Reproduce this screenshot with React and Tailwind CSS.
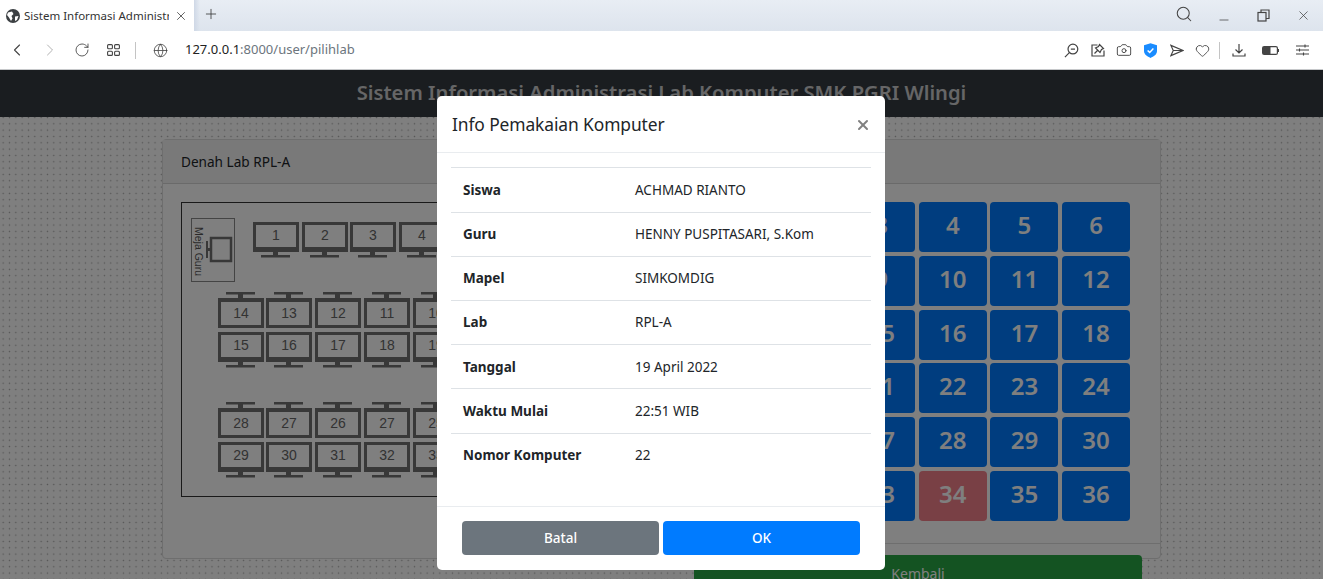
import React from 'react';
import { ChevronLeft, ChevronRight, RotateCw, Globe, Camera, Heart, Plus, X, Search, Minus } from 'lucide-react';

const topRow = [[253, '1'], [302, '2'], [350, '3'], [399, '4']];
const rowXs = [218, 266, 315, 364, 413];
const row2 = ['14', '13', '12', '11', '10'];
const row3 = ['15', '16', '17', '18', '19'];
const row4 = ['28', '27', '26', '27', '25'];
const row5 = ['29', '30', '31', '32', '33'];

const info = [
  ['Siswa', 'ACHMAD RIANTO'],
  ['Guru', 'HENNY PUSPITASARI, S.Kom'],
  ['Mapel', 'SIMKOMDIG'],
  ['Lab', 'RPL-A'],
  ['Tanggal', '19 April 2022'],
  ['Waktu Mulai', '22:51 WIB'],
  ['Nomor Komputer', '22'],
];

// monitor drawn at page offset minus the frame origin (182, 203 inside the border)
function Monitor({ x, y, label, flip }) {
  const px = x - 182;
  const py = y - 203;
  return (
    <g>
      <rect x={px + 1.5} y={py + 1.5} width="43" height="27" fill="none" stroke="#707070" strokeWidth="3" />
      {flip ? (
        <>
          <rect x={px} y={py} width="46" height="4" fill="#707070" />
          <rect x={px + 20} y={py - 5} width="5" height="5" fill="#707070" />
          <rect x={px + 8} y={py - 6} width="29" height="2.5" fill="#707070" />
        </>
      ) : (
        <>
          <rect x={px} y={py + 25} width="46" height="5" fill="#707070" />
          <rect x={px + 20} y={py + 30} width="5" height="4" fill="#707070" />
          <rect x={px + 8} y={py + 33} width="29" height="2.5" fill="#707070" />
        </>
      )}
      <text x={px + 23} y={flip ? py + 20 : py + 18} textAnchor="middle" fontSize="14" fill="#666" fontFamily="Liberation Sans, sans-serif">{label}</text>
    </g>
  );
}

function Denah() {
  return (
    <svg width="480" height="295" className="block border border-[#333] shrink-0">
      <rect x="9.5" y="15.5" width="43" height="63" fill="none" stroke="#888" strokeWidth="1" />
      <text transform="translate(13 24) rotate(90)" fontSize="10.5" fill="#555" fontFamily="Liberation Sans, sans-serif">Meja Guru</text>
      <rect x="29" y="35" width="20" height="23" fill="none" stroke="#707070" strokeWidth="2.5" />
      <rect x="24" y="45" width="5" height="3" fill="#707070" />
      <rect x="24" y="38" width="2" height="17" fill="#707070" />
      {topRow.map(([x, n]) => <Monitor key={n} x={x} y={222} label={n} />)}
      {rowXs.map((x, i) => <Monitor key={x} x={x} y={298} label={row2[i]} flip />)}
      {rowXs.map((x, i) => <Monitor key={x} x={x} y={332} label={row3[i]} />)}
      {rowXs.map((x, i) => <Monitor key={x} x={x} y={408} label={row4[i]} flip />)}
      {rowXs.map((x, i) => <Monitor key={x} x={x} y={442} label={row5[i]} />)}
    </svg>
  );
}

function ChromeBar() {
  return (
    <div className="h-[31px] bg-gradient-to-b from-[#e8edf4] to-[#dde4ed] flex items-stretch text-[#333]">
      <div className="w-[194px] bg-white flex items-center pl-[6px] shrink-0">
        <svg width="14" height="14" viewBox="0 0 14 14" className="shrink-0">
          <circle cx="7" cy="7" r="7" fill="#3c4043" />
          <path d="M2 3.5 L6 2.5 L7.5 5 L5.5 7 L6.5 9.5 L5 12 L3 8.5 L1 6 Z M9 7.5 L12.5 7 L11 11 L9 12 Z" fill="#fff" />
        </svg>
        <span className="ml-[4px] w-[145px] overflow-hidden whitespace-nowrap text-[11.5px] text-[#333]">Sistem Informasi Administrasi</span>
        <X size={14} strokeWidth={1.3} className="ml-[5px] shrink-0" />
      </div>
      <div className="w-[6px] bg-gradient-to-r from-[#cfd8e6] to-transparent" />
      <Plus size={16} strokeWidth={1.2} className="ml-[3px] mt-[6px]" />
      <div className="ml-auto flex items-start pt-[5px] pr-[12px] text-[#444]">
        <Search size={18} strokeWidth={1.4} />
        <Minus size={14} strokeWidth={1.3} className="ml-[24px] mt-[8px]" />
        <svg width="13" height="13" viewBox="0 0 13 13" fill="none" stroke="#444" strokeWidth="1.2" className="ml-[26px] mt-[4px]">
          <rect x="1" y="3.5" width="8" height="8.5" />
          <path d="M4 3.5V1h8v8.5H9" />
        </svg>
        <X size={15} strokeWidth={1.2} className="ml-[26px] mt-[3px]" />
      </div>
    </div>
  );
}

function ToolIcons() {
  return (
    <div className="ml-auto flex items-center pr-[14px] text-[#444]">
      <svg width="15" height="15" viewBox="0 0 16 16" fill="none" stroke="#444" strokeWidth="1.3">
        <circle cx="9.5" cy="6.5" r="5.2" />
        <path d="M5.7 10.3 1 15M7.3 6.5h4.4" />
      </svg>
      <svg width="14" height="14" viewBox="0 0 14 14" fill="none" stroke="#444" strokeWidth="1.2" className="ml-[12px]">
        <path d="M13 7.5V13H1V2h5.5" />
        <path d="M8.5 1.5 12.5 5.5 10.5 6.5 9 9.5 4.5 5 7.5 3.5ZM6.5 7.5 3.5 10.5" />
      </svg>
      <Camera size={16} strokeWidth={1.4} className="ml-[11px]" />
      <svg width="13" height="15" viewBox="0 0 13 15" className="ml-[12px]">
        <path d="M6.5 0.3 13 2.3V8c0 3.5-3.4 5.6-6.5 6.9C3.4 13.6 0 11.5 0 8V2.3Z" fill="#1a8cff" />
        <path d="M3.6 7.5 5.7 9.4 9.4 5.6" fill="none" stroke="#fff" strokeWidth="1.5" />
      </svg>
      <svg width="14" height="13" viewBox="0 0 15 13" fill="none" stroke="#444" strokeWidth="1.2" className="ml-[13px]">
        <path d="M1 1 14 6.5 1 12 3.5 6.5ZM3.5 6.5H14" />
      </svg>
      <Heart size={15} strokeWidth={1.4} className="ml-[11px]" />
      <div className="w-px h-[17px] bg-[#c4c4c4] ml-[9px]" />
      <svg width="14" height="14" viewBox="0 0 14 14" fill="none" stroke="#444" strokeWidth="1.2" className="ml-[12px]">
        <path d="M7 1v8.5M3.5 6.5 7 10l3.5-3.5M1 10.5V13h12v-2.5" />
      </svg>
      <svg width="17" height="9" viewBox="0 0 17 9" className="ml-[16px]">
        <rect x="0.6" y="0.6" width="14.8" height="7.8" rx="1.5" fill="none" stroke="#444" strokeWidth="1.2" />
        <rect x="1" y="1" width="7.5" height="7" fill="#444" />
        <rect x="15.7" y="3" width="1.3" height="3" fill="#444" />
      </svg>
      <svg width="13" height="12" viewBox="0 0 13 12" fill="none" stroke="#444" strokeWidth="1.1" className="ml-[17px]">
        <path d="M0 2h13M0 6h13M0 10h13M9 0.5v3M3.5 4.5v3M7.5 8.5v3" />
      </svg>
    </div>
  );
}

function Toolbar() {
  return (
    <div className="h-[38px] bg-white flex items-center border-b border-[#c6c8ca] box-content text-[#444]">
      <ChevronLeft size={20} strokeWidth={1.3} className="ml-[7px]" />
      <ChevronRight size={20} strokeWidth={1.1} className="ml-[13px] text-[#aaa]" />
      <RotateCw size={16} strokeWidth={1.3} className="ml-[14px]" />
      <svg width="13" height="12" viewBox="0 0 13 12" fill="none" stroke="#444" strokeWidth="1.1" className="ml-[17px]">
        <rect x="0.6" y="0.6" width="4.8" height="4.2" rx="1" />
        <rect x="7.6" y="0.6" width="4.8" height="4.2" rx="1" />
        <rect x="0.6" y="7.2" width="4.8" height="4.2" rx="1" />
        <rect x="7.6" y="7.2" width="4.8" height="4.2" rx="1" />
      </svg>
      <div className="w-px h-[17px] bg-[#c4c4c4] ml-[15px]" />
      <Globe size={15} strokeWidth={1.3} className="ml-[17px]" />
      <div className="ml-[17px] text-[13px] text-[#6c757d] whitespace-nowrap"><span className="text-[#222]">127.0.0.1</span>:8000/user/pilihlab</div>
      <ToolIcons />
    </div>
  );
}

export default function App() {
  const nums = Array.from({ length: 36 }, (_, i) => i + 1);
  return (
    <div className="h-[579px] w-[1323px] overflow-hidden" style={{ fontFamily: '"Noto Sans", sans-serif' }}>
      <ChromeBar />
      <Toolbar />
      <div className="relative h-[509px] overflow-hidden bg-white bg-[radial-gradient(circle,#aaa_0.6px,transparent_1px)] bg-[length:6.33px_6.33px]">
        <div className="h-[47px] pb-[3px] bg-[#343a40] flex items-center justify-center text-[20.2px] font-semibold text-white/75">
          Sistem Informasi Administrasi Lab Komputer SMK PGRI Wlingi
        </div>
        <div className="ml-[162px] mt-[22px] w-[999px] h-[420px] bg-white border border-[#dcdcdc] rounded-[4px]">
          <div className="h-[44px] pt-[1px] bg-[#f2f2f2] border-b border-[#d4d4d4] pl-[18px] flex items-center text-[13.6px] text-[#212529]">Denah Lab RPL-A</div>
          <div className="pl-[18px] pt-[18px] flex">
            <Denah />
            <div className="ml-[33px] w-[467px] shrink-0">
              <div className="ml-[10px] w-[426px] h-[319px] grid grid-cols-6 grid-rows-6 gap-x-[3.6px] gap-y-[3.8px]">
                {nums.map((n) => (
                  <div key={n} className={`rounded-[4px] flex items-center justify-center pb-[4px] text-[24px] font-semibold text-white ${n === 34 ? 'bg-[#f2808a]' : 'bg-[#007bff]'}`}>{n}</div>
                ))}
              </div>
              <div className="border-t border-[#dcdcdc] mt-[22px] -ml-[10px] w-[477px]" />
              <div className="mt-[11px] w-[448px] h-[36px] rounded-[4px] bg-[#28a745] flex items-center justify-center text-[14px] text-white">Kembali</div>
            </div>
          </div>
        </div>
        <div className="absolute inset-0 bg-black/50" />
        <div className="absolute left-[437px] top-[26px] w-[448px] h-[474px] bg-white rounded-[5px] flex flex-col text-[#212529]">
          <div className="h-[57px] pt-[1px] border-b border-[#e9ecef] flex items-center pl-[15px] pr-[14px]">
            <div className="text-[17.4px] tracking-[-0.1px]">Info Pemakaian Komputer</div>
            <X size={16} strokeWidth={3} className="ml-auto text-[#808080]" />
          </div>
          <div className="px-[14px] pt-[14.4px] flex-1">
            {info.map(([k, v]) => (
              <div key={k} className="h-[44.2px] border-t border-[#dee2e6] flex items-center pl-[12px] text-[13.5px]">
                <div className="w-[172px] font-bold">{k}</div>
                <div>{v}</div>
              </div>
            ))}
          </div>
          <div className="h-[64px] border-t border-[#e9ecef] pt-[14px] pl-[25px] flex gap-[4px]">
            <div className="w-[197px] h-[34px] rounded-[4px] bg-[#6c757d] text-white text-[13.5px] font-medium flex items-center justify-center">Batal</div>
            <div className="w-[197px] h-[34px] rounded-[4px] bg-[#007bff] text-white text-[13.5px] font-medium flex items-center justify-center">OK</div>
          </div>
        </div>
      </div>
    </div>
  );
}
